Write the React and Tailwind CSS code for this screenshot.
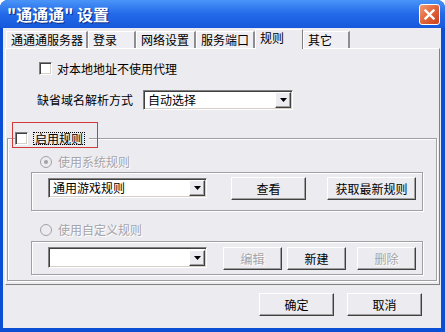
import React from "react";

const FONT = "font-['Noto_Sans_CJK_SC','Noto_Sans',sans-serif]";
const BG = "bg-[#ecebef]";
const BTN =
  "flex items-center justify-center text-[12px] leading-none bg-[#ecebef] border border-t-white border-l-white border-r-[#404040] border-b-[#404040] shadow-[inset_-1px_-1px_0_#a0a0a0] shrink-0";
const DIS = "text-[#a5a4a8] [text-shadow:1px_1px_0_#ffffff]";
const SUNKEN =
  "border border-t-[#808080] border-l-[#808080] border-r-white border-b-white shadow-[inset_1px_1px_0_#404040,inset_-1px_-1px_0_#d4d0c8]";
const ETCH = "border border-[#a09fa3] shadow-[inset_1px_1px_0_#ffffff,1px_1px_0_#ffffff]";

function Check() {
  return <div className={`w-[13px] h-[13px] bg-white shrink-0 ${SUNKEN}`} />;
}

function Radio({ checked }) {
  return (
    <div className="w-[12px] h-[12px] rounded-full border border-[#a3a2a6] bg-[#ecebef] flex items-center justify-center shrink-0">
      {checked && <div className="w-[4px] h-[4px] rounded-full bg-[#a3a2a6]" />}
    </div>
  );
}

function Select({ value, w, extra = "" }) {
  return (
    <div className={`flex items-center bg-white shrink-0 ${SUNKEN} ${w} ${extra}`}>
      <div className="flex-1 pl-[4px] text-[12px] leading-none">{value}</div>
      <div className="w-[16px] h-[16px] mr-[1px] flex items-center justify-center bg-[#ecebef] border border-t-white border-l-white border-r-[#404040] border-b-[#404040] shadow-[inset_-1px_-1px_0_#a0a0a0]">
        <svg width="7" height="4" viewBox="0 0 7 4">
          <path d="M0 0h7L3.5 4z" fill="#000" />
        </svg>
      </div>
    </div>
  );
}

function CloseBtn() {
  return (
    <div className="w-[21px] h-[21px] rounded-[3px] border border-white bg-linear-to-br from-[#f29a6e] via-[#e2643a] to-[#c8401a] flex items-center justify-center">
      <svg width="11" height="11" viewBox="0 0 11 11">
        <path d="M1.5 1.5L9.5 9.5M9.5 1.5L1.5 9.5" stroke="#fff" strokeWidth="2.4" strokeLinecap="square" />
      </svg>
    </div>
  );
}

const TABS = [
  { t: "通通通服务器", w: "w-[82px]" },
  { t: "登录", w: "w-[48px]" },
  { t: "网络设置", w: "w-[60px]" },
  { t: "服务端口", w: "w-[59px]" },
  { t: "规则", w: "w-[48px]", sel: true },
  { t: "其它", w: "w-[47px]" },
];

export default function App() {
  return (
    <div className={`relative w-[445px] h-[332px] bg-[#0b50d4] rounded-t-[8px] flex flex-col ${FONT} text-black`}>
      <div className="h-[28px] shrink-0 flex items-center justify-between rounded-t-[8px] bg-linear-to-b from-[#4a94f8] via-[#2369e8] to-[#1659dc] pl-[7px] pr-[5px]">
        <span className="text-white font-bold text-[16px] leading-none [text-shadow:1px_1px_0_#0a2a80]">"通通通" 设置</span>
        <CloseBtn />
      </div>
      <div className={`flex-1 ml-[3px] mr-[4px] mb-[4px] ${BG} flex flex-col`}>
        <div className="flex items-end pl-[3px] pt-[1px] h-[20px]">
          {TABS.map((tab) =>
            tab.sel ? (
              <div
                key={tab.t}
                className={`${tab.w} h-[20px] -mb-[1px] relative z-10 ${BG} border-l border-t border-white border-r border-r-[#808080] flex items-center pl-[4px] text-[12px] leading-none pb-[3px]`}
              >
                {tab.t}
              </div>
            ) : (
              <div
                key={tab.t}
                className={`${tab.w} h-[17px] bg-[#efeef2] border-l border-t border-white border-r-2 border-r-[#8e8d91] flex items-center pl-[4px] text-[12px] leading-none`}
              >
                {tab.t}
              </div>
            )
          )}
        </div>
        <div className={`ml-[2px] w-[435px] h-[237px] ${BG} border border-t-white border-l-white border-r-[#808080] border-b-[#808080] flex flex-col`}>
          <div className="mt-[13px] ml-[33px] flex items-center gap-[5px]">
            <Check />
            <span className="text-[12px] leading-none">对本地地址不使用代理</span>
          </div>
          <div className="mt-[15px] ml-[31px] flex items-center gap-[10px]">
            <span className="text-[12px] leading-none">缺省域名解析方式</span>
            <Select value="自动选择" w="w-[150px]" extra="h-[20px]" />
          </div>
          <div className={`mt-[28px] ml-[1px] w-[430px] h-[143px] ${ETCH} flex flex-col`}>
            <div className={`-mt-[7px] ml-[7px] w-fit ${BG} pr-[4px] flex items-center gap-[5px]`}>
              <Check />
              <span className="text-[12px] leading-[11px] border border-dotted border-black px-[1px]">启用规则</span>
            </div>
            <div className="mt-[11px] ml-[32px] flex items-center gap-[6px]">
              <Radio checked />
              <span className={`text-[12px] leading-none ${DIS}`}>使用系统规则</span>
            </div>
            <div className={`mt-[4px] ml-[23px] w-[392px] h-[39px] ${ETCH} flex items-start pl-[16px] pt-[4px]`}>
              <Select value="通用游戏规则" w="w-[159px]" extra="h-[20px] mt-[1px]" />
              <div className={`${BTN} ml-[24px] w-[75px] h-[23px]`}>查看</div>
              <div className={`${BTN} ml-[21px] w-[89px] h-[23px]`}>获取最新规则</div>
            </div>
            <div className="mt-[13px] ml-[32px] flex items-center gap-[6px]">
              <Radio />
              <span className={`text-[12px] leading-none ${DIS}`}>使用自定义规则</span>
            </div>
            <div className={`mt-[5px] ml-[23px] w-[392px] h-[34px] ${ETCH} flex items-start pl-[16px] pt-[5px]`}>
              <Select value="" w="w-[159px]" extra="h-[21px]" />
              <div className={`${BTN} ml-[16px] w-[59px] h-[23px] ${DIS}`}>编辑</div>
              <div className={`${BTN} ml-[5px] w-[59px] h-[23px]`}>新建</div>
              <div className={`${BTN} ml-[11px] w-[59px] h-[23px] ${DIS}`}>删除</div>
            </div>
          </div>
        </div>
        <div className="mt-[8px] flex justify-end pr-[19px] gap-[13px]">
          <div className={`${BTN} w-[75px] h-[23px]`}>确定</div>
          <div className={`${BTN} w-[75px] h-[23px]`}>取消</div>
        </div>
      </div>
      <div className="absolute left-[12px] top-[122px] w-[86px] h-[26px] border border-[#d23a3a]" />
    </div>
  );
}
